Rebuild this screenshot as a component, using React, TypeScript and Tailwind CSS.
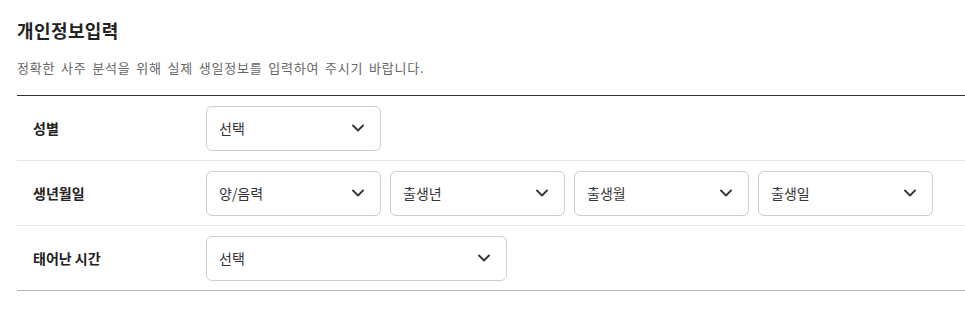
import React from "react";

function Chevron() {
  return (
    <svg width="12" height="8" viewBox="0 0 12 8" fill="none" className="shrink-0">
      <path d="M1 1.5 L6 6.5 L11 1.5" stroke="#333" strokeWidth="1.8" strokeLinecap="round" strokeLinejoin="round" />
    </svg>
  );
}

function Select({ label, className }: { label: string; className: string }) {
  return (
    <div
      className={`flex h-[45px] items-center justify-between rounded-[6px] border border-[#cfcfcf] bg-white pl-3 pr-4 text-[14px] text-[#333] ${className}`}
    >
      <span>{label}</span>
      <Chevron />
    </div>
  );
}

function Row({ label, last, children }: { label: string; last?: boolean; children: React.ReactNode }) {
  return (
    <div className={`flex h-[65px] items-center border-b ${last ? "border-[#b5b5b5]" : "border-[#e6e6e6]"}`}>
      <div className="w-[189px] shrink-0 pl-4 text-[14px] font-bold text-[#222]">{label}</div>
      <div className="flex gap-[9px]">{children}</div>
    </div>
  );
}

export default function App() {
  return (
    <div
      className="min-h-[321px] bg-white pl-[17px] pt-[19px]"
      style={{ fontFamily: '"Noto Sans CJK KR", "Noto Sans", sans-serif' }}
    >
      <h2 className="text-[18px] font-bold leading-[22px] tracking-[0.4px] text-[#222]">개인정보입력</h2>
      <p className="mt-[17px] text-[13px] leading-[20px] tracking-[0.8px] [word-spacing:2px] text-[#666]">
        정확한 사주 분석을 위해 실제 생일정보를 입력하여 주시기 바랍니다.
      </p>
      <div className="mt-[17px] border-t border-[#333]">
        <Row label="성별">
          <Select label="선택" className="w-[175px]" />
        </Row>
        <Row label="생년월일">
          <Select label="양/음력" className="w-[175px]" />
          <Select label="출생년" className="w-[175px]" />
          <Select label="출생월" className="w-[175px]" />
          <Select label="출생일" className="w-[175px]" />
        </Row>
        <Row label="태어난 시간" last>
          <Select label="선택" className="w-[301px]" />
        </Row>
      </div>
    </div>
  );
}
